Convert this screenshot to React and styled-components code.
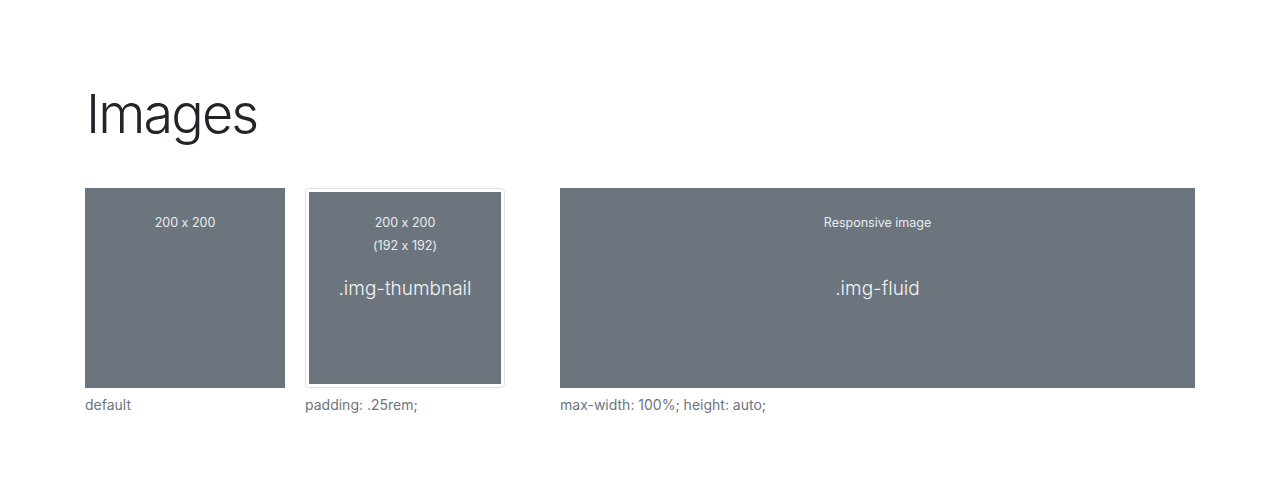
import React from "react";
import styled, { createGlobalStyle } from "styled-components";

const Global = createGlobalStyle`
  html, body { margin: 0; padding: 0; background: #fff; }
  body {
    font-family: Inter, "Helvetica Neue", "Liberation Sans", sans-serif;
    font-feature-settings: "calt" 0;
    color: #212529;
    -webkit-font-smoothing: antialiased;
  }
`;

const Page = styled.div`
  padding: 80px 85px 0 85px;
`;

const Title = styled.h1`
  margin: 0 0 41px 1px;
  font-size: 54px;
  font-weight: 300;
  line-height: 67px;
  letter-spacing: -1.9px;
  color: #212529;
`;

const Row = styled.div`
  display: flex;
  align-items: flex-start;
`;

const Figure = styled.figure`
  margin: 0 ${(p) => p.$gap || 0}px 0 0;
  display: flex;
  flex-direction: column;
  width: ${(p) => p.$width}px;
`;

const Frame = styled.div`
  box-sizing: border-box;
  width: ${(p) => p.$width}px;
  height: 200px;
  padding: ${(p) => (p.$thumb ? "3px" : "0")};
  border: ${(p) => (p.$thumb ? "1px solid #dee2e6" : "none")};
  border-radius: ${(p) => (p.$thumb ? "4px" : "0")};
  background: #fff;
  margin-bottom: 6px;
`;

const Placeholder = styled.div`
  width: 100%;
  height: 100%;
  background: #6c757d;
  color: #dee2e6;
  display: flex;
  flex-direction: column;
  align-items: center;
  padding-top: ${(p) => p.$top}px;
  box-sizing: border-box;
`;

const Small = styled.div`
  font-size: 12.5px;
  line-height: 23px;
  color: #e9ecef;
`;

const Big = styled.div`
  margin-top: ${(p) => p.$mt}px;
  font-size: 19px;
  font-weight: 300;
  line-height: 24px;
  color: #f1f3f5;
`;

const Caption = styled.figcaption`
  font-size: 14px;
  line-height: 21px;
  color: #6c757d;
`;

export default function App() {
  return (
    <>
      <Global />
      <Page>
        <Title>Images</Title>
        <Row>
          <Figure $width={200} $gap={20}>
            <Frame $width={200}>
              <Placeholder $top={23}>
                <Small>200 x 200</Small>
              </Placeholder>
            </Frame>
            <Caption>default</Caption>
          </Figure>
          <Figure $width={200} $gap={55}>
            <Frame $width={200} $thumb>
              <Placeholder $top={19}>
                <Small>200 x 200</Small>
                <Small>(192 x 192)</Small>
                <Big $mt={20}>.img-thumbnail</Big>
              </Placeholder>
            </Frame>
            <Caption>padding: .25rem;</Caption>
          </Figure>
          <Figure $width={635}>
            <Frame $width={635}>
              <Placeholder $top={23}>
                <Small>Responsive image</Small>
                <Big $mt={43}>.img-fluid</Big>
              </Placeholder>
            </Frame>
            <Caption>max-width: 100%; height: auto;</Caption>
          </Figure>
        </Row>
      </Page>
    </>
  );
}
